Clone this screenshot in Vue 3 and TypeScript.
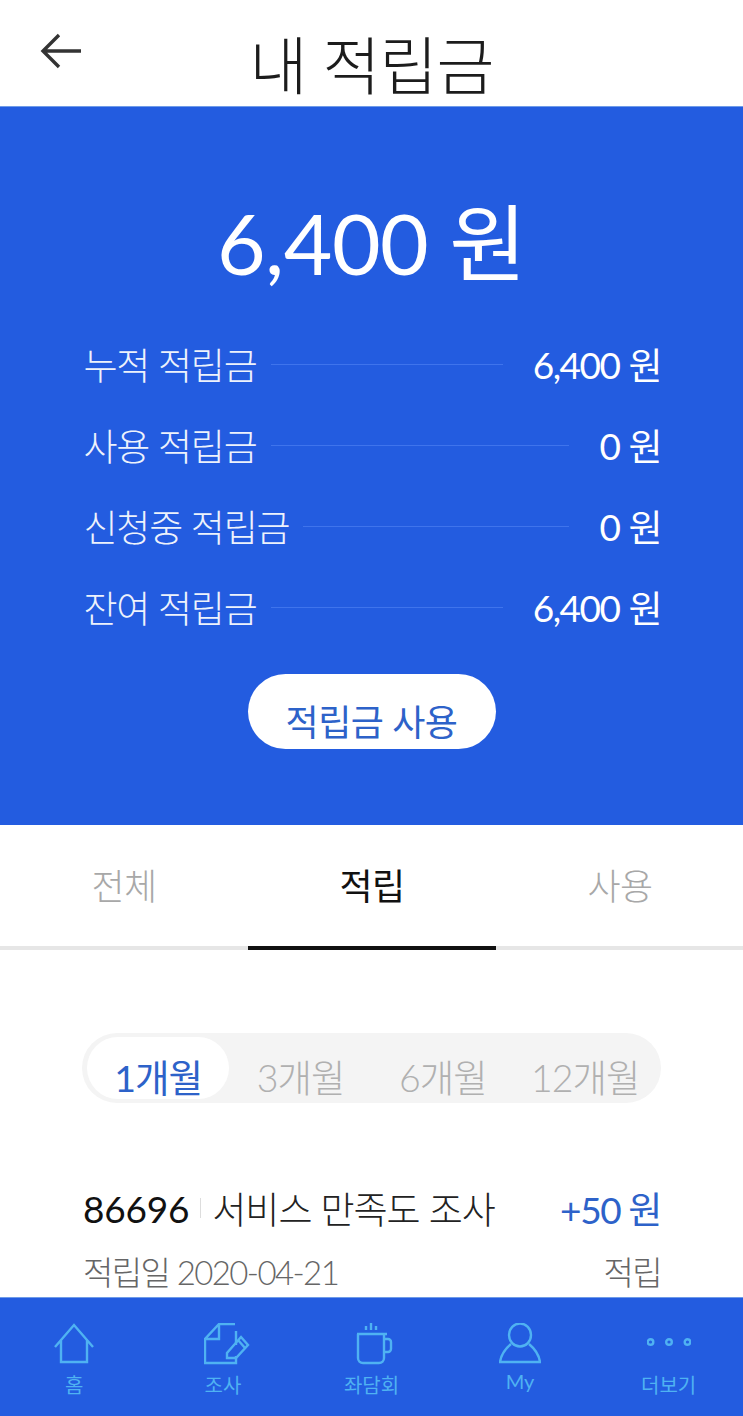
<script setup lang="ts">
interface Row { label: string; value: string }
const rows: Row[] = [
  { label: '누적 적립금', value: '6,400' },
  { label: '사용 적립금', value: '0' },
  { label: '신청중 적립금', value: '0' },
  { label: '잔여 적립금', value: '6,400' },
]
const tabs = ['전체', '적립', '사용']
const periods = ['1개월', '3개월', '6개월', '12개월']
</script>

<template>
  <div class="page">
    <header class="top">
      <svg class="back" width="44" height="40" viewBox="0 0 44 40" fill="none" stroke="#333" stroke-width="3.4">
        <path d="M42 20H4M20 4 4 20l16 16" />
      </svg>
      <h1>내 적립금</h1>
    </header>

    <section class="hero">
      <div class="total">6,400 원</div>
      <div class="rows">
        <div v-for="r in rows" :key="r.label" class="row">
          <span class="label">{{ r.label }}</span>
          <i class="line"></i>
          <span class="val">{{ r.value }}</span>
          <span class="won">원</span>
        </div>
      </div>
      <button class="use">적립금 사용</button>
    </section>

    <nav class="tabs">
      <div v-for="(t, i) in tabs" :key="t" class="tab" :class="{ on: i === 1 }">{{ t }}</div>
    </nav>

    <div class="pills">
      <div v-for="(p, i) in periods" :key="p" class="pill" :class="{ on: i === 0 }">{{ p }}</div>
    </div>

    <article class="item">
      <div class="item-top">
        <span class="id">86696</span>
        <i class="sep"></i>
        <span class="name">서비스 만족도 조사</span>
        <span class="amt">+50 원</span>
      </div>
      <div class="item-sub">
        <span>적립일 2020-04-21</span>
        <span>적립</span>
      </div>
    </article>

    <footer class="bar">
      <div class="nav">
        <svg width="42" height="42" viewBox="0 0 42 42"><path d="M2 24 21 2l19 22M8 17v22h26V17" /></svg>
        <span>홈</span>
      </div>
      <div class="nav shift">
        <svg width="46" height="42" viewBox="0 0 46 42"><path d="M31 1H15L1 16v24h31V33M15 1v15H1M32 8v14" /><path d="M37 14l7 8-12 13h-9v-5zM34 17l7 8" /></svg>
        <span>조사</span>
      </div>
      <div class="nav shift">
        <svg width="40" height="42" viewBox="0 0 40 42"><path d="M2 11h30M3 11v24a5 5 0 0 0 5 5h16a5 5 0 0 0 5-5V11M30 16h3a3 3 0 0 1 3 3v7a3 3 0 0 1-3 3h-3M11 7V3M16 7V0M21 7V3" /></svg>
        <span>좌담회</span>
      </div>
      <div class="nav my">
        <svg width="42" height="42" viewBox="0 0 42 42"><ellipse cx="21" cy="12" rx="11" ry="11.5" /><path d="M12 21C6 26 2 32 1 39h40c-1-7-5-13-11-18" /></svg>
        <span>My</span>
      </div>
      <div class="nav">
        <svg width="44" height="42" viewBox="0 0 44 42"><circle cx="3.5" cy="19" r="2.8" /><circle cx="22" cy="19" r="2.8" /><circle cx="40.5" cy="19" r="2.8" /></svg>
        <span>더보기</span>
      </div>
    </footer>
  </div>
</template>

<style>
html, body { margin: 0; background: #fff; }
</style>

<style scoped>
.page {
  width: 743px;
  height: 1416px;
  overflow: hidden;
  position: relative;
  background: #fff;
  font-family: Lato, "Noto Sans CJK KR", sans-serif;
  font-weight: 300;
}
.top {
  height: 106px;
  position: relative;
  display: flex;
  justify-content: center;
  align-items: flex-end;
}
.back { position: absolute; left: 39px; top: 31px; }
h1 {
  margin: 0 0 -3px;
  font-size: 63px;
  line-height: 88px;
  font-weight: 300;
  letter-spacing: -1px;
  color: #1c1c1c;
}
.hero {
  height: 719px;
  box-sizing: border-box;
  background: #235ce0;
  border-top: 1px solid #6f9be8;
  color: #fff;
  display: flex;
  flex-direction: column;
  align-items: center;
  padding-top: 86px;
}
.total { font-size: 84px; line-height: 100px; font-weight: 400; letter-spacing: -0.5px; }
.rows {
  box-sizing: border-box;
  width: 580px;
  margin: 44px 0 0 2px;
  padding-left: 1px;
  display: flex;
  flex-direction: column;
  gap: 27px;
}
.row { height: 54px; display: flex; align-items: center; font-size: 37px; color: #fff; }
.label { opacity: 0.92; letter-spacing: -1.2px; }
.line { flex: 1; height: 1px; background: #3f74ec; margin-left: 14px; }
.val { font-weight: 400; letter-spacing: -1.5px; margin-left: 30px; }
.won { margin-left: 9px; font-weight: 400; }
.use {
  margin-top: 40px;
  width: 248px;
  height: 75px;
  box-sizing: border-box;
  border: 0;
  border-radius: 38px;
  background: #fff;
  color: #2d62c9;
  font: inherit;
  font-size: 36px;
  font-weight: 400;
  letter-spacing: -0.5px;
  padding: 20px 0 0;
  line-height: 48px;
}
.tabs { height: 125px; display: flex; box-sizing: border-box; border-bottom: 4px solid #e6e6e6; }
.tab {
  flex: 0 0 248px;
  margin-bottom: -4px;
  box-sizing: border-box;
  border-bottom: 4px solid transparent;
  padding-bottom: 4px;
  display: flex;
  align-items: center;
  justify-content: center;
  font-size: 36px;
  color: #a8a8a8;
  letter-spacing: -0.5px;
}
.tab.on { color: #111; font-weight: 400; border-bottom-color: #111; }
.pills {
  margin: 83px 82px 0 82px;
  height: 70px;
  display: flex;
  background: #f4f4f4;
  border-radius: 35px;
  padding: 4px 4.5px 0 5px;
  box-sizing: border-box;
}
.pill {
  flex: 1;
  height: 62px;
  display: flex;
  align-items: flex-end;
  justify-content: center;
  font-size: 37.5px;
  line-height: 42px;
  letter-spacing: -1px;
  color: #b0b0b0;
}
.pill.on { background: #fff; border-radius: 31px; color: #2d62c9; font-weight: 400; }
.item { margin: 75px 82px 0 83px; }
.item-top { display: flex; align-items: center; height: 60px; font-size: 37px; color: #222; }
.id { color: #111; font-weight: 400; letter-spacing: -0.2px; }
.sep { width: 1px; height: 20px; background: #ddd; margin: 0 11px; }
.name { letter-spacing: -1px; }
.amt { margin-left: auto; color: #2d62c9; letter-spacing: -1.4px; font-weight: 400; }
.item-sub {
  display: flex;
  justify-content: space-between;
  height: 48px;
  margin-top: 10px;
  font-size: 33px;
  line-height: 48px;
  color: #666;
  letter-spacing: -1.6px;
}
.bar {
  position: absolute;
  left: 0; right: 0; bottom: 0;
  height: 119px;
  background: #235ce0;
  border-top: 1px solid #6f9be8;
  box-sizing: border-box;
  display: flex;
}
.nav {
  flex: 1;
  display: flex;
  flex-direction: column;
  align-items: center;
  padding-top: 25px;
  color: #4fb2f2;
  font-size: 20px;
  font-weight: 400;
  line-height: 26px;
}
.nav svg { fill: none; stroke: #4fb2f2; stroke-width: 2.4; margin-bottom: 7px; }
.nav.shift svg { margin-left: 8px; }
.my span { margin-top: -4px; }
</style>
